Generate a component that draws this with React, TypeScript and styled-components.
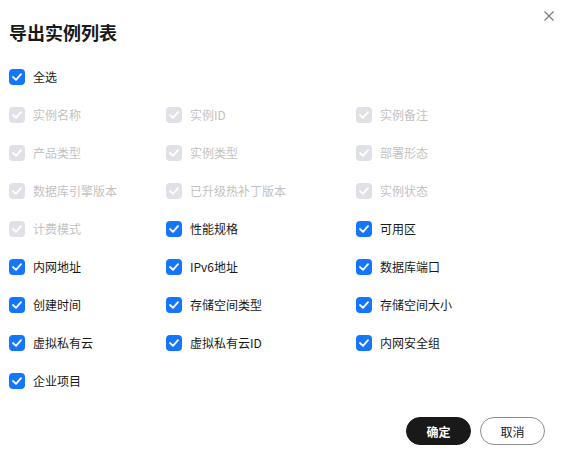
import React from "react";
import styled, { createGlobalStyle } from "styled-components";

const Global = createGlobalStyle`
  html, body { margin: 0; padding: 0; background: #fff; }
  body { font-family: "Noto Sans CJK SC", "Noto Sans", sans-serif; color: #191919; }
`;

const Dialog = styled.div`
  width: 565px;
  height: 452px;
  box-sizing: border-box;
  padding: 20px 20px 0 9px;
  position: relative;
  display: flex;
  flex-direction: column;
`;

const Title = styled.h2`
  margin: 0;
  font-size: 18px;
  font-weight: 700;
  line-height: 24px;
  color: #191919;
`;

const Close = styled.button`
  position: absolute;
  top: 11px;
  right: 11px;
  width: 10px;
  height: 10px;
  padding: 0;
  border: 0;
  background: none;
  display: flex;
`;

const Grid = styled.div`
  margin-top: 25px;
  display: grid;
  grid-template-columns: 157px 190px 1fr;
  row-gap: 22px;
`;

const Item = styled.label<{ $full?: boolean }>`
  display: flex;
  align-items: center;
  gap: 8px;
  height: 16px;
  font-size: 12px;
  line-height: 16px;
  color: ${(p) => (p.$disabled ? "#c2c2c2" : "#191919")};
  grid-column: ${(p) => (p.$full ? "1 / -1" : "auto")};
` as any;

const Box = styled.span<{ $disabled?: boolean }>`
  width: 16px;
  height: 16px;
  border-radius: 4px;
  background: ${(p) => (p.$disabled ? "#dfe1e6" : "#1476ff")};
  display: flex;
  align-items: center;
  justify-content: center;
  flex: none;
`;

const Footer = styled.div`
  margin-top: 28px;
  display: flex;
  justify-content: flex-end;
  gap: 9px;
`;

const Button = styled.button<{ $primary?: boolean }>`
  width: 65px;
  height: 28px;
  border-radius: 14px;
  font-family: "Noto Sans CJK SC", sans-serif;
  font-size: 12px;
  padding: 0;
  cursor: pointer;
  background: ${(p) => (p.$primary ? "#191919" : "#fff")};
  color: ${(p) => (p.$primary ? "#fff" : "#191919")};
  border: 1px solid ${(p) => (p.$primary ? "#191919" : "#8c8c8c")};
  font-weight: ${(p) => (p.$primary ? 700 : 400)};
`;

const Check = () => (
  <svg width="10" height="8" viewBox="0 0 10 8">
    <path d="M1 4 L4 6.8 L9 1.2" fill="none" stroke="#fff" strokeWidth="1.8" strokeLinecap="round" strokeLinejoin="round" />
  </svg>
);

const items: [string, boolean][] = [
  ["实例名称", true], ["实例ID", true], ["实例备注", true],
  ["产品类型", true], ["实例类型", true], ["部署形态", true],
  ["数据库引擎版本", true], ["已升级热补丁版本", true], ["实例状态", true],
  ["计费模式", true], ["性能规格", false], ["可用区", false],
  ["内网地址", false], ["IPv6地址", false], ["数据库端口", false],
  ["创建时间", false], ["存储空间类型", false], ["存储空间大小", false],
  ["虚拟私有云", false], ["虚拟私有云ID", false], ["内网安全组", false],
  ["企业项目", false],
];

export default function App() {
  return (
    <>
      <Global />
      <Dialog>
        <Title>导出实例列表</Title>
        <Close aria-label="close">
          <svg width="10" height="10" viewBox="0 0 10 10">
            <path d="M0.5 0.5 L9.5 9.5 M9.5 0.5 L0.5 9.5" stroke="#7a7a7a" strokeWidth="1.2" />
          </svg>
        </Close>
        <Grid>
          <Item $full>
            <Box><Check /></Box>
            全选
          </Item>
          {items.map(([t, d]) => (
            <Item key={t} $disabled={d}>
              <Box $disabled={d}><Check /></Box>
              {t}
            </Item>
          ))}
        </Grid>
        <Footer>
          <Button $primary>确定</Button>
          <Button>取消</Button>
        </Footer>
      </Dialog>
    </>
  );
}
